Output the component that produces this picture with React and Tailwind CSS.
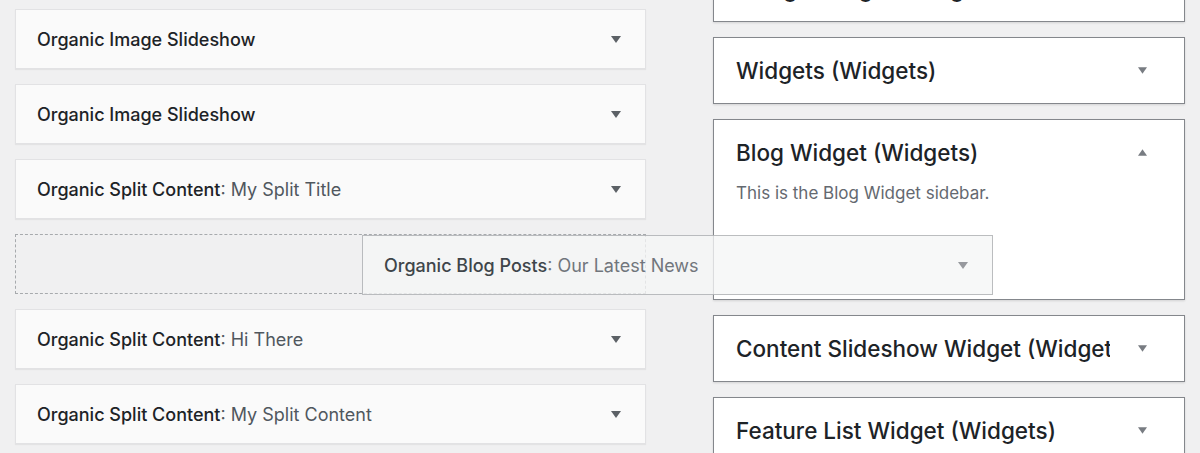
const font = { fontFamily: "Inter, 'Noto Sans', sans-serif" };

const leftItems = [
  { title: "Organic Image Slideshow" },
  { title: "Organic Image Slideshow" },
  { title: "Organic Split Content", sub: "My Split Title" },
  { placeholder: true },
  { title: "Organic Split Content", sub: "Hi There" },
  { title: "Organic Split Content", sub: "My Split Content" },
];

function Arrow({ up, className = "" }) {
  return (
    <svg width="10" height="7" viewBox="0 0 10 7" className={className}>
      {up ? <path d="M5 0 L10 7 L0 7 Z" fill="currentColor" /> : <path d="M0 0 L10 0 L5 7 Z" fill="currentColor" />}
    </svg>
  );
}

function LeftRow({ title, sub }) {
  return (
    <div className="h-[60px] flex items-center justify-between bg-[#fafafa] border border-[#e2e2e4] shadow-[0_1px_1px_rgba(0,0,0,0.05)] pl-[21px] pr-[24px]">
      <p className="text-[18px] text-[#1d2327] font-medium">
        {title}
        {sub && <span className="font-normal text-[#50575e]">: {sub}</span>}
      </p>
      <Arrow className="text-[#5c6166]" />
    </div>
  );
}

function RightBox({ title, up, children, className = "" }) {
  return (
    <div className={`bg-white border border-[#84878c] shadow-[0_1px_2px_rgba(0,0,0,0.12)] ${className}`}>
      <div className="h-[65px] flex items-center justify-between pl-[22px] pr-[37px]">
        <p className="w-[374px] overflow-hidden whitespace-nowrap text-[22.5px] font-medium text-[#1d2327]">
          {title}
        </p>
        <Arrow up={up} className="shrink-0 w-[9px] text-[#787c82]" />
      </div>
      {children}
    </div>
  );
}

export default function App() {
  return (
    <div style={font} className="relative w-[1200px] h-[453px] overflow-hidden bg-[#f0f0f1]">
      <div className="flex">
        {/* left: sidebar widgets being sorted */}
        <div className="w-[631px] ml-[15px] mt-[9px] flex flex-col gap-[15px]">
          {leftItems.map((it, i) =>
            it.placeholder ? (
              <div key={i} className="h-[60px] border border-dashed border-[#a7aaad]" />
            ) : (
              <LeftRow key={i} title={it.title} sub={it.sub} />
            )
          )}
        </div>

        {/* right: sidebars */}
        <div className="w-[472px] ml-[67px] -mt-[45px] flex flex-col gap-[15px]">
          <RightBox title="Design Widget (Widgets)" />
          <RightBox title="Widgets (Widgets)" />
          <RightBox title="Blog Widget (Widgets)" up className="h-[181px]">
            <p className="pl-[22px] -mt-[4px] text-[17px] text-[#646970]">This is the Blog Widget sidebar.</p>
          </RightBox>
          <RightBox title="Content Slideshow Widget (Widgets)" />
          <RightBox title="Feature List Widget (Widgets)" />
        </div>
      </div>

      {/* widget being dragged */}
      <div className="absolute left-[362px] top-[235px] w-[631px] h-[60px] flex items-center justify-between pl-[21px] pr-[24px] bg-[#f6f7f7]/85 border border-[#b4b6b9] opacity-90">
        <p className="text-[18px] text-[#2c3338] font-medium">
          Organic Blog Posts<span className="font-normal text-[#646970]">: Our Latest News</span>
        </p>
        <Arrow className="text-[#8c8f94]" />
      </div>
    </div>
  );
}
